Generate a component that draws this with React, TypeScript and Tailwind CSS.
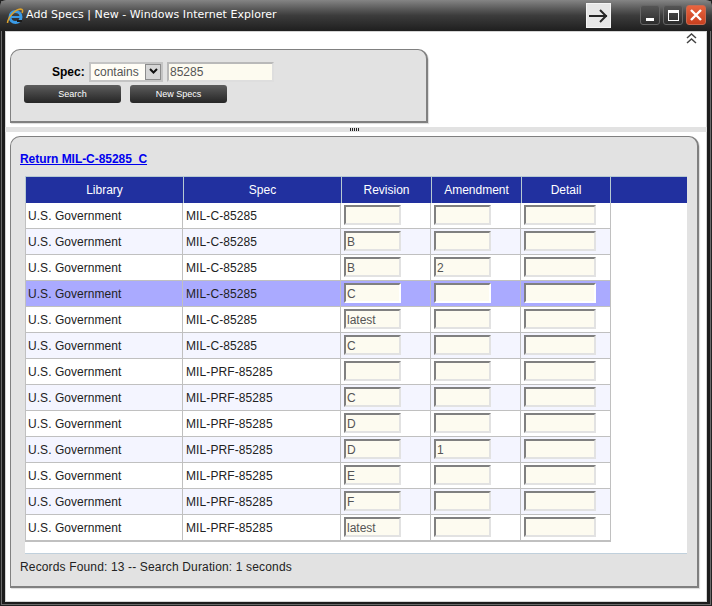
const rows = [
  ["MIL-C-85285", "", ""],
  ["MIL-C-85285", "B", ""],
  ["MIL-C-85285", "B", "2"],
  ["MIL-C-85285", "C", ""],
  ["MIL-C-85285", "latest", ""],
  ["MIL-C-85285", "C", ""],
  ["MIL-PRF-85285", "", ""],
  ["MIL-PRF-85285", "C", ""],
  ["MIL-PRF-85285", "D", ""],
  ["MIL-PRF-85285", "D", "1"],
  ["MIL-PRF-85285", "E", ""],
  ["MIL-PRF-85285", "F", ""],
  ["MIL-PRF-85285", "latest", ""],
];

function Field({ value, width, active }: { value: string; width: string; active: boolean }) {
  return (
    <div
      className={`${width} h-[20px] bg-[#fdfbf0] border-2 pl-px text-[12px] leading-[18px] text-[#555] ${
        active
          ? "border-t-[#808080] border-l-[#808080] border-r-white border-b-white"
          : "border-t-[#808080] border-l-[#808080] border-r-[#e2e2e2] border-b-[#e2e2e2]"
      }`}
    >
      {value}
    </div>
  );
}

function IeLogo() {
  return (
    <svg width="18" height="18" viewBox="0 0 18 18" className="shrink-0 mt-[1px]">
      <circle cx="9.5" cy="10" r="5.5" fill="none" stroke="#3a9be6" strokeWidth="3" />
      <rect x="5" y="9" width="9" height="2" fill="#3a9be6" />
      <path d="M11 14h5" stroke="#1a1a1a" strokeWidth="2" />
      <path d="M1.5 16C2 10 9 2.500 14.500 2c2.500 0 2.500 2 1.500 4" fill="none" stroke="#dba22e" strokeWidth="1.5" />
    </svg>
  );
}

export default function App() {
  return (
    <div className="w-[712px] h-[606px] flex flex-col bg-[#1c1c1c] font-['Liberation_Sans',Arial,sans-serif] overflow-hidden shadow-[inset_0_0_0_1px_#222,inset_0_0_0_2px_#6a6a6a]">
      <div className="h-[31px] shrink-0 flex items-center pl-[6px] pr-[5px] rounded-t-[6px] bg-gradient-to-b from-[#858585] via-[#3c3c3c] to-[#1f1f1f]">
        <IeLogo />
        <span className="ml-[2px] text-[11px] text-white font-['DejaVu_Sans',sans-serif] tracking-[0.05px]">
          Add Specs | New - Windows Internet Explorer
        </span>
        <div className="ml-auto mr-[29px] w-[25px] h-[25px] flex items-center justify-center bg-[#e6e6e6] border border-[#f4f4f4]">
          <svg width="21" height="14" viewBox="0 0 21 14">
            <path d="M1 7h18M12 1l6 6-6 6" fill="none" stroke="#262626" strokeWidth="2" />
          </svg>
        </div>
        <div className="flex gap-[3px] mb-[1px] mr-px">
          <div className="w-[20px] h-[20px] rounded-[3px] border border-[#666] bg-gradient-to-b from-[#555] to-[#2c2c2c] flex items-end justify-center pb-[3px]">
            <div className="w-[8px] h-[3px] bg-white" />
          </div>
          <div className="w-[20px] h-[20px] rounded-[3px] border border-[#666] bg-gradient-to-b from-[#555] to-[#2c2c2c] flex items-center justify-center">
            <div className="w-[11px] h-[11px] border border-white border-t-[3px]" />
          </div>
          <div className="w-[20px] h-[20px] rounded-[3px] border border-[#c9694f] bg-gradient-to-b from-[#e8643f] to-[#c8401f] flex items-center justify-center">
            <svg width="12" height="12" viewBox="0 0 12 12">
              <path d="M1 1l10 10M11 1L1 11" stroke="white" strokeWidth="2.4" />
            </svg>
          </div>
        </div>
      </div>

      <div className="mx-[5px] h-[571px] shrink-0 bg-white flex flex-col relative shadow-[inset_0_0_0_1px_#d4d4d4]">
        <svg width="11" height="11" viewBox="0 0 11 11" className="absolute right-[10px] top-[2px]">
          <path d="M1 5l4.500-4 4.500 4M1 10l4.500-4 4.500 4" fill="none" stroke="#444" strokeWidth="1.5" />
        </svg>

        <div className="h-[96px] shrink-0 pl-[5px] pt-[18px]">
          <div className="w-[418px] h-[74px] bg-[#e2e2e2] border border-[#808080] border-r-2 border-b-2 rounded-t-[10px] shadow-[1px_1px_1px_#dcdcdc] flex flex-col pl-[13px] pt-[11px]">
            <div className="flex items-center h-[21px]">
              <span className="ml-[28px] w-[32px] text-[12px] font-bold text-black">Spec:</span>
              <div className="ml-[5px] w-[74px] h-[20px] flex border-2 border-[#c4c4c4] bg-[#fffdf6]">
                <span className="w-[54px] pl-[3px] text-[12px] leading-[16px] text-[#555]">contains</span>
                <div className="flex-1 bg-[#d6d6d6] border border-[#8c8c8c] flex items-center justify-center">
                  <svg width="9" height="7" viewBox="0 0 9 7">
                    <path d="M1 1l3.500 3.500L8 1" fill="none" stroke="#111" strokeWidth="2" />
                  </svg>
                </div>
              </div>
              <div className="ml-[4px] w-[107px] h-[20px] bg-[#fdfbf0] border-2 border-[#dedede] border-t-[#b9b9b9] border-l-[#b9b9b9] pl-px text-[12px] leading-[16px] text-[#555]">
                85285
              </div>
            </div>
            <div className="flex gap-[9px] mt-[3px]">
              {["Search", "New Specs"].map((label) => (
                <div
                  key={label}
                  className="w-[97px] h-[18px] rounded-[3px] bg-gradient-to-b from-[#5e5e5e] to-[#262626] text-white text-[9px] leading-[19px] text-center"
                >
                  {label}
                </div>
              ))}
            </div>
          </div>
        </div>

        <div className="h-[5px] shrink-0 bg-[#e2e2e2] flex justify-center">
          <svg width="10" height="3" viewBox="0 0 10 3" className="mt-px -ml-[3px]">
            <path d="M.5 0v3M2.500 0v3M4.500 0v3M6.500 0v3M8.500 0v3" stroke="#222" strokeWidth="1" />
          </svg>
        </div>

        <div className="pl-[5px] pt-[4px]">
          <div className="w-[689px] h-[452px] bg-[#e2e2e2] border border-[#808080] border-r-2 border-b-2 rounded-t-[10px] shadow-[1px_1px_1px_#dcdcdc] flex flex-col pl-[9px] pt-[15px]">
            <a className="text-[12px] leading-[14px] font-bold text-[#0000ee] underline h-[24px] block tracking-[-0.05px]">
              Return MIL-C-85285_C
            </a>
            <div className="ml-[5px] w-[662px] bg-white border-b border-[#c0d0dc]">
              <div className="flex h-[27px] bg-[#21309f] text-white text-[12px] border-t border-[#b6c9d2]">
                {[
                  ["Library", "w-[158px]"],
                  ["Spec", "w-[158px]"],
                  ["Revision", "w-[90px]"],
                  ["Amendment", "w-[90px]"],
                  ["Detail", "w-[90px]"],
                ].map(([label, width]) => (
                  <div
                    key={label}
                    className={`${width} border-l border-[#b6c9d2] last:border-r flex items-center justify-center`}
                  >
                    {label}
                  </div>
                ))}
              </div>
              <div className="w-[586px] border-l border-r border-[#c0c0c0] border-b">
                {rows.map(([spec, revision, amendment], i) => {
                  const active = i === 3;
                  const bg = active ? "bg-[#aaaaff]" : i % 2 === 1 ? "bg-[#f4f5ff]" : "bg-white";
                  return (
                    <div key={i} className={`flex h-[26px] border-b border-[#c0c0c0] ${bg} text-[12px] text-[#222]`}>
                      <div className="w-[157px] pl-[2px] leading-[26px] border-r border-[#c0c0c0] tracking-[0.05px]">U.S. Government</div>
                      <div className="w-[158px] pl-[3px] leading-[26px] border-r border-[#c0c0c0] tracking-[0.1px]">{spec}</div>
                      <div className="w-[90px] pl-[3px] pt-[2px] border-r border-[#c0c0c0]">
                        <Field value={revision} width="w-[57px]" active={active} />
                      </div>
                      <div className="w-[90px] pl-[3px] pt-[2px] border-r border-[#c0c0c0]">
                        <Field value={amendment} width="w-[57px]" active={active} />
                      </div>
                      <div className="pl-[3px] pt-[2px]">
                        <Field value="" width="w-[72px]" active={active} />
                      </div>
                    </div>
                  );
                })}
              </div>
              <div className="h-[11px]" />
            </div>
            <div className="mt-[6px] text-[12px] leading-[14px] text-[#222] tracking-[0.15px]">
              Records Found: 13 -- Search Duration: 1 seconds
            </div>
          </div>
        </div>
      </div>
    </div>
  );
}
